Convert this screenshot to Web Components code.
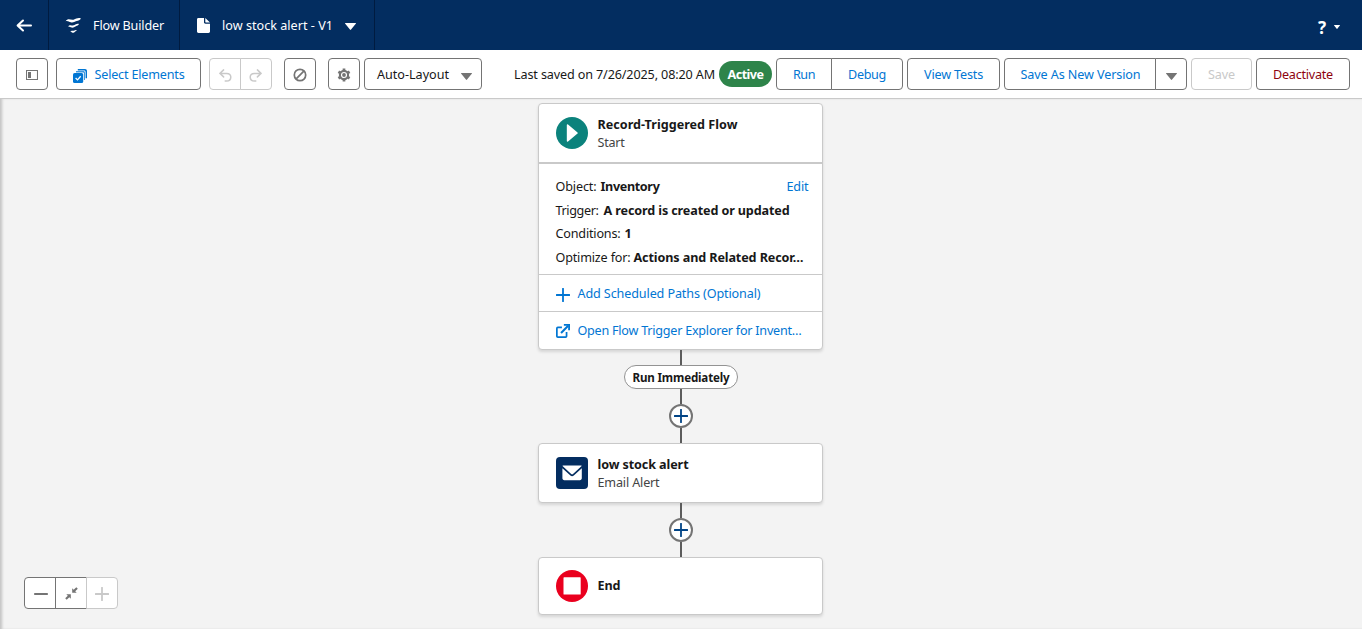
<!DOCTYPE html>
<html lang="en">
<head>
<meta charset="utf-8">
<title>low stock alert - V1 | Flow Builder</title>
<style>
body{margin:0;height:629px;overflow:hidden;font:12.6px/18px "Noto Sans","Open Sans",sans-serif;color:#181818;background:#f3f3f3}
</style>
</head>
<body>
<flow-app></flow-app>
<script>
const define = (name, html, setup) => {
  const tpl = document.createElement('template');
  tpl.innerHTML = html;
  customElements.define(name, class extends HTMLElement {
    constructor(){ super(); this.attachShadow({mode:'open'}).append(tpl.content.cloneNode(true)); }
    connectedCallback(){ if (setup) setup(this, this.shadowRoot); }
  });
};

/* Single line of text tracked to a given advance width. */
customElements.define('fit-text', class extends HTMLElement {
  constructor(){
    super();
    this.attachShadow({mode:'open'}).innerHTML = `<style>:host{display:block;flex:none;white-space:pre}span{display:inline-block}</style><span><slot></slot></span>`;
  }
  connectedCallback(){
    const w = +this.getAttribute('w'), s = this.shadowRoot.querySelector('span');
    this.style.width = w + 'px';
    s.style.letterSpacing = (w - s.getBoundingClientRect().width) / this.textContent.length + 'px';
  }
});

const ICONS = {
  back:['0 0 16 14','<path d="M15 7H2M7 1.6 1.6 7 7 12.4" fill="none" stroke="currentColor" stroke-width="2" stroke-linecap="round" stroke-linejoin="round"/>'],
  flow:['0 0 17 17','<g fill="currentColor"><path d="M.6 4.200C3.200.600 5.500 3.300 8.500 2.700 11.500 2 12.800.400 15.900 1.500c-.6 1.700-2.800 2.200-4.200 2.500C9 4.600 8.300 6 5.800 5.300 4 4.800 2.500 3.200.6 4.200z"/><path d="M2.800 9.700C5 6.900 6.700 8.900 8.900 8.300c2-.5 3-2 5.100-1.200-.5 1.400-2 1.700-3.100 2.100-1.800.6-2.500 1.900-4.400 1.400C5.200 10.300 4.300 9 2.800 9.700z"/><path d="M5.200 14.900c1.400-1.900 2.400-.8 3.700-1.200 1.100-.3 1.700-1.100 2.900-.6-.3 1-1.100 1.200-1.800 1.600-1 .6-1.300 1.300-2.500 1-.8-.2-1.300-1.200-2.300-.8z"/></g>'],
  file:['0 0 13 16','<path d="M1.5 0H7v4.5C7 5.6 7.6 6 8.5 6H13v8.5c0 .9-.6 1.5-1.5 1.5h-10C.6 16 0 15.4 0 14.5v-13C0 .6.6 0 1.500 0zM8.300 0 13 4.700H8.800c-.3 0-.5-.2-.5-.5z" fill="currentColor"/>'],
  down:['0 0 10 7','<path d="M.5 0h9c.5 0 .6.4.3.8L5.500 6.600c-.3.4-.7.4-1 0L.2.800C-.1.4 0 0 .5 0z" fill="currentColor"/>'],
  panel:['0 0 12 10','<path d="M.5.5h11v9H.5z" fill="none" stroke="currentColor" stroke-width="1.100"/><path d="M2 2h3v6H2z" fill="currentColor"/>'],
  select:['0 0 14 14','<path d="M4.800 0H12c1.200 0 2 .8 2 2v7.300h-1.400V3c0-1-.6-1.600-1.600-1.600H4.800z" fill="currentColor"/><path d="M3 2h7.400C11.300 2 12 2.600 12 3.600V11h-1V4.800C11 4 10.500 3.500 9.700 3.500H3z" fill="currentColor" opacity=".75"/><rect y="4" width="10.200" height="10" rx="1.600" fill="currentColor"/><path d="m2.600 9 1.900 1.900 3.200-3.700" fill="none" stroke="#fff" stroke-width="1.300"/>'],
  undo:['0 0 13 13','<path d="M4.600.9.900 4.400l3.700 3.500M1.500 4.400h6.200c5.600 0 5.400 7.600-.2 7.600H6.200" fill="none" stroke="currentColor" stroke-width="1.500" stroke-linecap="round"/>'],
  redo:['0 0 13 13','<path d="m8.400.9 3.700 3.500-3.700 3.500M11.500 4.400H5.300c-5.600 0-5.400 7.600.2 7.600h1.300" fill="none" stroke="currentColor" stroke-width="1.500" stroke-linecap="round"/>'],
  ban:['0 0 14 14','<g fill="none" stroke="currentColor" stroke-width="1.700"><circle cx="7" cy="7" r="5.700"/><path d="m3.200 10.800 7.600-7.600"/></g>'],
  gear:['0 0 14 14','<g fill="none" stroke="currentColor"><circle cx="7" cy="7" r="4.100" stroke-width="2.100"/><path d="M7 .5v2.400M7 11.100v2.400M1.400 3.750l2 1.200M10.600 9.050l2 1.200M1.400 10.250l2-1.200M10.600 4.950l2-1.200" stroke-width="2.700"/></g><circle cx="7" cy="7" r="1.900" fill="currentColor"/>'],
  plus:['0 0 14 14','<path d="M7 .7v12.600M.7 7h12.600" stroke="currentColor" stroke-width="1.800" stroke-linecap="round"/>'],
  minus:['0 0 14 14','<path d="M.8 7h12.400" stroke="currentColor" stroke-width="1.800" stroke-linecap="round"/>'],
  fit:['0 0 13 13','<path d="M7.200 1.300v4.500h4.500l-1.500-1.500 2.600-2.600L11.300.2 8.700 2.800zM5.800 11.700V7.200H1.300l1.500 1.500L.2 11.300l1.500 1.500 2.600-2.600z" fill="currentColor"/>'],
  open:['0 0 13 13','<path d="M5.500 3.200H1.700q-.9 0-.9.900v7.200q0 .9.900.9h7.200q.9 0 .9-.9V7.500" fill="none" stroke="currentColor" stroke-width="1.600"/><path d="M4.700 8.300 11.300 1.700" stroke="currentColor" stroke-width="1.900"/><path d="M7.300 0H13v5.700h-1.700V1.700h-4z" fill="currentColor"/>'],
  start:['0 0 32 32','<circle cx="16" cy="16" r="16" fill="#0b827c"/><path d="M10.800 8c0-.8.6-1 1.200-.6l9.500 8c.4.4.4.8 0 1.200l-9.500 8c-.6.4-1.200.2-1.200-.6z" fill="#fff"/>'],
  mail:['0 0 32 32','<rect width="32" height="32" rx="4" fill="#032d60"/><path d="M7.200 8.400h17.800c.6 0 .8.400.4.800l-8.400 7.800c-.6.500-1.200.5-1.800 0L6.800 9.200c-.4-.4-.2-.8.4-.8zM6.400 11.300l8 7.300c1.100.9 2.300.9 3.400 0l8-7.300v10c0 1.100-.8 1.900-1.900 1.900H8.300c-1.100 0-1.900-.8-1.900-1.900z" fill="#fff"/>'],
  stop:['0 0 32 32','<circle cx="16" cy="16" r="16" fill="#ea001e"/><rect x="7.500" y="7.300" width="17.200" height="17.200" rx=".6" fill="#fff"/>']
};
customElements.define('ui-icon', class extends HTMLElement {
  connectedCallback(){
    const [box, body] = ICONS[this.getAttribute('name')];
    const w = this.getAttribute('w'), h = this.getAttribute('h') || w;
    if (!this.shadowRoot) this.attachShadow({mode:'open'});
    this.shadowRoot.innerHTML = `<style>:host{display:block;flex:none}svg{display:block}</style><svg width="${w}" height="${h}" viewBox="${box}" preserveAspectRatio="none">${body}</svg>`;
  }
});

define('tool-button', `<style>
:host{display:flex;flex:none;box-sizing:border-box;height:32px;border:1px solid #747474;border-radius:4px;background:#fff;align-items:center;justify-content:center;color:#0176d3}
:host([icon]){color:#747474;width:32px}
:host([disabled]){border-color:#c9c9c9;color:#c9c9c9}
:host([destructive]){color:#8e030f}
:host([neutral]){color:#181818}
:host([first]){border-radius:4px 0 0 4px}
:host([mid]){border-radius:0;margin-left:-1px}
:host([last]){border-radius:0 4px 4px 0;margin-left:-1px}
::slotted(fit-text){padding-top:2px}
</style><slot></slot>`, el => { const w = el.getAttribute('width'); if (w) el.style.width = w + 'px'; });

define('flow-header', `<style>
:host{display:flex;height:50px;background:#032d60;color:#fff}
div{display:flex;align-items:center;box-sizing:border-box;border-right:1px solid #001b40}
.back{width:49px;padding-left:16px}
.app{width:131px;padding-left:16px;gap:11px}
.name{width:195px;padding-left:17px;gap:12px}
.app fit-text,.name fit-text{padding-top:2px}
.help{margin-left:auto;border:0;padding:5px 22px 0 0;gap:7px;font-size:17px;font-weight:700}
</style>
<div class="back"><ui-icon name="back" w="16" h="13"></ui-icon></div>
<div class="app"><ui-icon name="flow" w="17"></ui-icon><fit-text w="71">Flow Builder</fit-text></div>
<div class="name"><ui-icon name="file" w="13" h="15"></ui-icon><fit-text w="111">low stock alert - V1</fit-text><ui-icon name="down" w="11" h="7" style="padding-top:3px"></ui-icon></div>
<div class="help"><fit-text w="9">?</fit-text><ui-icon name="down" w="6" h="4" style="margin-top:-2px"></ui-icon></div>`);

define('status-badge', `<style>:host{display:flex;flex:none;width:53px;height:26px;margin:0 4px;border-radius:13px;background:#2e844a;color:#fff;font-weight:700;align-items:center;justify-content:center}::slotted(*){padding-top:2px}</style><slot></slot>`);

define('flow-toolbar', `<style>
:host{display:flex;box-sizing:border-box;height:49px;padding:8px 12px 8px 16px;border-bottom:1px solid #c9c9c9;background:#fff}
div{display:flex;align-items:center}
.left{gap:8px}
.right{margin-left:auto}
.saved{padding-top:2px}
.group{display:flex}
</style>
<div class="left">
<tool-button icon><ui-icon name="panel" w="12" h="10" style="padding-top:2px"></ui-icon></tool-button>
<tool-button width="145" style="gap:8px"><ui-icon name="select" w="14" style="padding-top:3px"></ui-icon><fit-text w="90">Select Elements</fit-text></tool-button>
<div class="group"><tool-button icon disabled first><ui-icon name="undo" w="13" style="padding:2px 0 0 1px"></ui-icon></tool-button><tool-button icon disabled last><ui-icon name="redo" w="13" style="padding:2px 1px 0 0"></ui-icon></tool-button></div>
<tool-button icon style="margin-left:4px"><ui-icon name="ban" w="14" style="padding-top:1px"></ui-icon></tool-button>
<tool-button icon style="margin-left:4px"><ui-icon name="gear" w="14" style="padding-top:1px"></ui-icon></tool-button>
<tool-button neutral width="118" style="gap:12px;margin-left:-4px;padding-left:3px"><fit-text w="72">Auto-Layout</fit-text><ui-icon name="down" w="11" h="7" style="color:#747474;padding-top:4px"></ui-icon></tool-button>
</div>
<div class="right">
<fit-text class="saved" w="201">Last saved on 7/26/2025, 08:20 AM</fit-text>
<status-badge><fit-text w="36">Active</fit-text></status-badge>
<tool-button width="56" first><fit-text w="22">Run</fit-text></tool-button>
<tool-button width="72" last><fit-text w="38">Debug</fit-text></tool-button>
<tool-button width="93" style="margin:0 4px"><fit-text w="59">View Tests</fit-text></tool-button>
<tool-button width="152" first style="padding-left:1px"><fit-text w="120">Save As New Version</fit-text></tool-button>
<tool-button icon last><ui-icon name="down" w="11" h="7" style="padding-top:4px"></ui-icon></tool-button>
<tool-button width="61" disabled style="margin:0 4px"><fit-text w="27">Save</fit-text></tool-button>
<tool-button width="94" destructive><fit-text w="60">Deactivate</fit-text></tool-button>
</div>`);

define('flow-card', `<style>
:host{display:block;flex:none;box-sizing:border-box;width:285px;margin-right:1px;border:1px solid #c9c9c9;border-radius:4px;background:#fff;box-shadow:0 2px 3px rgba(0,0,0,.12)}
header{display:flex;align-items:center;height:58px;gap:10px;padding-left:16.500px}
section{padding-top:2px}
:host([compact]) header{height:56px}
:host([compact]) section{padding-top:0}
.title{font-weight:700}
.sub{color:#444}
</style><header><slot name="icon"></slot><section><div class="title"><slot name="title"></slot></div><div class="sub"><slot name="sub"></slot></div></section></header><slot></slot>`);

define('flow-details', `<style>
:host{display:block;border-top:2px solid #c9c9c9;height:112px;box-sizing:border-box;padding:14px 13.500px 0 16.500px}
.row{display:flex;height:23.600px;align-items:flex-start}
b{display:block}
.edit{margin-left:auto;color:#0176d3}
</style>
<div class="row"><fit-text w="41">Object:</fit-text><b style="padding-left:4px"><fit-text w="59">Inventory</fit-text></b><fit-text class="edit" w="22">Edit</fit-text></div>
<div class="row"><fit-text w="43">Trigger:</fit-text><b style="padding-left:5px"><fit-text w="186">A record is created or updated</fit-text></b></div>
<div class="row"><fit-text w="65">Conditions:</fit-text><b style="padding-left:4px"><fit-text w="7">1</fit-text></b></div>
<div class="row"><fit-text w="75">Optimize for:</fit-text><b style="padding-left:3px"><fit-text w="170">Actions and Related Recor…</fit-text></b></div>`);

define('card-link', `<style>
:host{display:flex;box-sizing:border-box;height:37px;border-top:1px solid #c9c9c9;padding-left:16.500px;gap:8px;align-items:center;color:#0176d3}
</style><slot></slot>`);

define('flow-connector', `<style>
:host{display:flex;flex:none;flex-direction:column;align-items:center}
.line{width:2px;height:15px;background:#5c5c5c}
.pill{display:flex;box-sizing:border-box;width:114px;height:24px;border:1px solid #939393;border-radius:12px;background:#fff;align-items:center;justify-content:center;font-weight:700;font-size:11.600px;padding-top:2px}
.add{display:flex;box-sizing:border-box;width:24px;height:24px;border:2px solid #747474;border-radius:50%;background:#fff;color:#014486;align-items:center;justify-content:center}
.branch{display:none}
:host([label]) .branch{display:contents}
</style>
<span class="branch"><span class="line"></span><span class="pill"><slot></slot></span></span>
<span class="line"></span><span class="add"><ui-icon name="plus" w="14"></ui-icon></span><span class="line"></span>`);

define('zoom-controls', `<style>:host{position:absolute;left:24px;top:478px;display:flex}ui-icon{padding-top:1px}</style>
<tool-button icon first><ui-icon name="minus" w="14" style="padding-left:1px"></ui-icon></tool-button><tool-button icon mid><ui-icon name="fit" w="13"></ui-icon></tool-button><tool-button icon disabled last><ui-icon name="plus" w="14"></ui-icon></tool-button>`);

define('flow-canvas', `<style>
:host{position:relative;display:flex;flex-direction:column;align-items:center;box-sizing:border-box;height:530px;padding-top:4px;background:#f3f3f3;box-shadow:inset 3px 0 3px -1px rgba(0,0,0,.2)}
</style>
<flow-card><ui-icon slot="icon" name="start" w="32"></ui-icon><fit-text slot="title" w="140">Record-Triggered Flow</fit-text><fit-text slot="sub" w="27">Start</fit-text>
<flow-details></flow-details>
<card-link><ui-icon name="plus" w="14" style="padding-top:3px"></ui-icon><fit-text w="183" style="padding-top:1px">Add Scheduled Paths (Optional)</fit-text></card-link>
<card-link style="height:38px"><ui-icon name="open" w="14"></ui-icon><fit-text w="224">Open Flow Trigger Explorer for Invent…</fit-text></card-link>
</flow-card>
<flow-connector label><fit-text w="97">Run Immediately</fit-text></flow-connector>
<flow-card><ui-icon slot="icon" name="mail" w="32"></ui-icon><fit-text slot="title" w="91">low stock alert</fit-text><fit-text slot="sub" w="62">Email Alert</fit-text></flow-card>
<flow-connector></flow-connector>
<flow-card compact><ui-icon slot="icon" name="stop" w="32"></ui-icon><fit-text slot="title" w="23">End</fit-text></flow-card>
<zoom-controls></zoom-controls>`);

define('flow-app', `<style>:host{display:block}</style><flow-header></flow-header><flow-toolbar></flow-toolbar><flow-canvas></flow-canvas>`);
</script>
</body>
</html>
